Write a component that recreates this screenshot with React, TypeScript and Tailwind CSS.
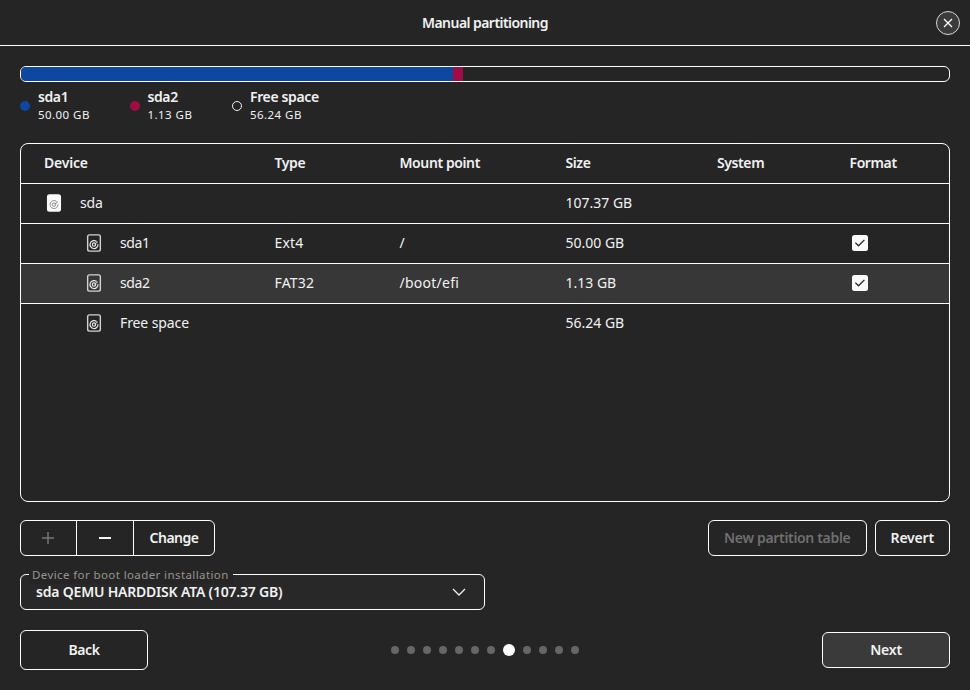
import type { ReactNode } from "react";

const legend = [
  { name: "sda1", size: "50.00 GB", dot: "bg-[#0e479f]", box: "w-[109.5px]", track: "tracking-[-0.4px]" },
  { name: "sda2", size: "1.13 GB", dot: "bg-[#a20c45]", box: "w-[102.5px]", track: "tracking-[-0.4px]" },
  { name: "Free space", size: "56.24 GB", dot: "border border-[#f0f0f0]", box: "w-[100px]", track: "tracking-[-0.37px]" },
];

const rows = [
  { device: "sda", type: "", mount: "", size: "107.37 GB", format: false, child: false, selected: false },
  { device: "sda1", type: "Ext4", mount: "/", size: "50.00 GB", format: true, child: true, selected: false },
  { device: "sda2", type: "FAT32", mount: "/boot/efi", size: "1.13 GB", format: true, child: true, selected: true },
  { device: "Free space", type: "", mount: "", size: "56.24 GB", format: false, child: true, selected: false },
];

const columns = "grid grid-cols-[253.5px_125px_166px_151.5px_132.5px_1fr] items-center pb-px";

function DriveIcon({ filled }: { filled: boolean }) {
  const ink = filled ? "#777" : "#e8e8e8";
  return (
    <svg width="20" height="20" viewBox="0 0 20 20" fill="none" className="block shrink-0">
      <rect x="3.65" y="1.9" width="12.7" height="16.2" rx="1.8" fill={filled ? "#fafafa" : "none"} stroke={filled ? "#fafafa" : "#d4d4d4"} strokeWidth="1.4" />
      <path d="M12.6 8.5A4 4 0 1 0 14 11.2" stroke={ink} strokeWidth={filled ? 0.8 : 1.2} />
      <circle cx="10" cy="11.6" r="1.7" stroke={ink} strokeWidth={filled ? 0.8 : 1.1} />
      <path d="M10.6 11.2L13.8 8.9" stroke={ink} strokeWidth={filled ? 0.8 : 1} />
    </svg>
  );
}

function Check() {
  return (
    <span className="flex size-4 items-center justify-center rounded-[2.5px] bg-[#fafafa]">
      <svg width="16" height="16" viewBox="0 0 16 16" fill="none">
        <path d="M3.3 7.6L6.5 10.8L12.4 4.9" stroke="#262626" strokeWidth="1.3" />
      </svg>
    </span>
  );
}

function Button({ children, className }: { children: ReactNode; className: string }) {
  return (
    <button className={`flex items-center justify-center rounded-md border border-white font-semibold ${className}`}>
      {children}
    </button>
  );
}

export default function App() {
  return (
    <div className="flex h-[690px] w-[970px] flex-col overflow-hidden bg-[#252525] font-['Noto_Sans','Open_Sans',sans-serif] text-[14px] leading-5 whitespace-nowrap text-[#f2f2f2]">
      <header className="grid h-[46px] shrink-0 grid-cols-[1fr_auto_1fr] items-center border-b border-white pr-[10px]">
        <span />
        <h1 className="pl-[10px] font-semibold tracking-[-0.55px]">Manual partitioning</h1>
        <button className="flex size-6 items-center justify-center justify-self-end rounded-full border border-[#d8d8d8] bg-[#3b3b3b]">
          <svg width="10" height="10" viewBox="0 0 10 10" fill="none">
            <path d="M1 1L9 9M9 1L1 9" stroke="#fff" strokeWidth="1.2" />
          </svg>
        </button>
      </header>

      <main className="flex flex-col px-5 pt-5">
        <div className="flex h-4 overflow-hidden rounded-[6px] border border-white">
          <div className="w-[432px] bg-[#0e479f]" />
          <div className="w-[10px] bg-[#a20c45]" />
        </div>

        <div className="mt-[6px] flex h-9">
          {legend.map((item) => (
            <div key={item.name} className={`flex items-center ${item.box}`}>
              <span className={`mr-2 size-[10px] shrink-0 rounded-full ${item.dot}`} />
              <div>
                <div className={`h-[18px] leading-[18px] font-semibold ${item.track}`}>{item.name}</div>
                <div className="h-[18px] text-[11.5px] leading-[18px] tracking-[0.45px]">{item.size}</div>
              </div>
            </div>
          ))}
        </div>

        <section className="mt-[19px] h-[359px] overflow-hidden rounded-lg border border-white">
          <div className={`${columns} h-[39px] font-semibold tracking-[-0.4px]`}>
            <span className="pl-[23px] tracking-[-0.2px]">Device</span>
            <span>Type</span>
            <span>Mount point</span>
            <span>Size</span>
            <span>System</span>
            <span>Format</span>
          </div>
          {rows.map((row) => (
            <div key={row.device} className={`${columns} h-10 border-t border-white ${row.selected ? "bg-[#373737]" : ""}`}>
              <div className={`flex items-center gap-4 ${row.child ? "pl-[63px]" : "pl-[23px]"}`}>
                <DriveIcon filled={!row.child} />
                <span className={row.child && row.type ? "tracking-[-0.35px]" : "tracking-[-0.1px]"}>{row.device}</span>
              </div>
              <span className="tracking-[0.2px]">{row.type}</span>
              <span className="tracking-[0.25px]">{row.mount}</span>
              <span className="tracking-[0px]">{row.size}</span>
              <span />
              <span className="pl-[2px]">{row.format && <Check />}</span>
            </div>
          ))}
        </section>

        <div className="mt-[18px] flex h-9 items-stretch">
          <div className="flex w-[195px] overflow-hidden rounded-md border border-white">
            <button className="flex w-14 items-center justify-center border-r border-white pr-px">
              <svg width="12" height="12" viewBox="0 0 12 12"><path d="M0 6H12M6 0V12" stroke="#757575" strokeWidth="1.5" /></svg>
            </button>
            <button className="flex w-[57px] items-center justify-center border-r border-white">
              <svg width="12" height="12" viewBox="0 0 12 12"><path d="M0 6H12" stroke="#f5f5f5" strokeWidth="2" /></svg>
            </button>
            <button className="flex-1 font-semibold tracking-[-0.5px]">Change</button>
          </div>
          <Button className="ml-auto w-[158.5px] tracking-[-0.33px] text-[#6f6f6f]">New partition table</Button>
          <Button className="ml-2 w-[75.5px] tracking-[-0.2px]">Revert</Button>
        </div>

        <div className="relative mt-[18px] flex h-9 w-[465px] items-center rounded-md border border-white bg-[#282828] pl-[15px]">
          <span className="absolute -top-[9px] left-[8px] bg-[#252525] pr-[4px] pl-[3px] text-[11.5px] leading-[18px] tracking-[0.4px] text-[#98948e]">
            Device for boot loader installation
          </span>
          <span className="font-semibold tracking-[-0.2px]">sda QEMU HARDDISK ATA (107.37 GB)</span>
          <svg className="mr-[18px] ml-auto" width="14" height="8" viewBox="0 0 14 8" fill="none">
            <path d="M1 1L7 7L13 1" stroke="#f0f0f0" strokeWidth="1.3" />
          </svg>
        </div>

        <footer className="mt-5 grid h-10 grid-cols-[1fr_auto_1fr] items-center">
          <Button className="h-10 w-32 tracking-[-0.4px]">Back</Button>
          <div className="flex items-center gap-2">
            {Array.from({ length: 12 }, (_, i) => (
              <span key={i} className={i === 7 ? "size-3 rounded-full bg-white" : "size-2 rounded-full bg-[#666]"} />
            ))}
          </div>
          <Button className="h-9 w-32 justify-self-end bg-[#3a3a3a] tracking-[-0.2px]">Next</Button>
        </footer>
      </main>
    </div>
  );
}
